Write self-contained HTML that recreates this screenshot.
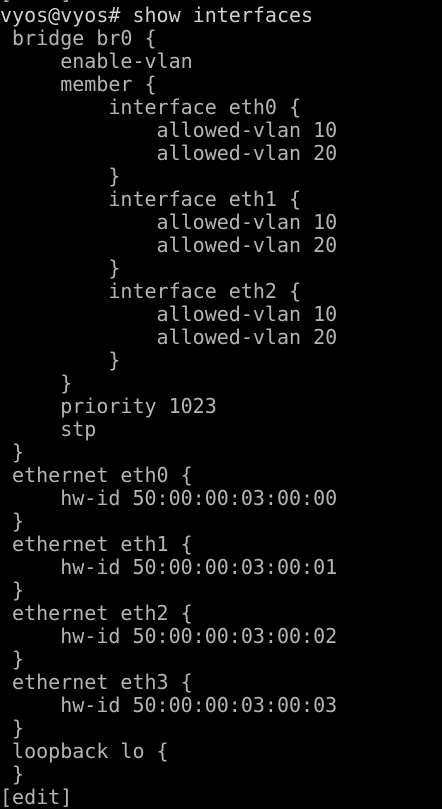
<!DOCTYPE html><html><head><style>
html,body{margin:0;padding:0;background:#000;width:442px;height:793px;overflow:hidden}
pre{position:absolute;left:0;top:-19px;margin:0;font-family:"DejaVu Sans Mono","Liberation Mono",monospace;font-size:20px;line-height:23px;color:#b4b4b4;letter-spacing:0}
.p{color:#cfcfcf}
</style></head><body><pre>[edit]
<span class="p">vyos@vyos# show interfaces</span>
 bridge br0 {
     enable-vlan
     member {
         interface eth0 {
             allowed-vlan 10
             allowed-vlan 20
         }
         interface eth1 {
             allowed-vlan 10
             allowed-vlan 20
         }
         interface eth2 {
             allowed-vlan 10
             allowed-vlan 20
         }
     }
     priority 1023
     stp
 }
 ethernet eth0 {
     hw-id 50:00:00:03:00:00
 }
 ethernet eth1 {
     hw-id 50:00:00:03:00:01
 }
 ethernet eth2 {
     hw-id 50:00:00:03:00:02
 }
 ethernet eth3 {
     hw-id 50:00:00:03:00:03
 }
 loopback lo {
 }
[edit]
</pre></body></html>
